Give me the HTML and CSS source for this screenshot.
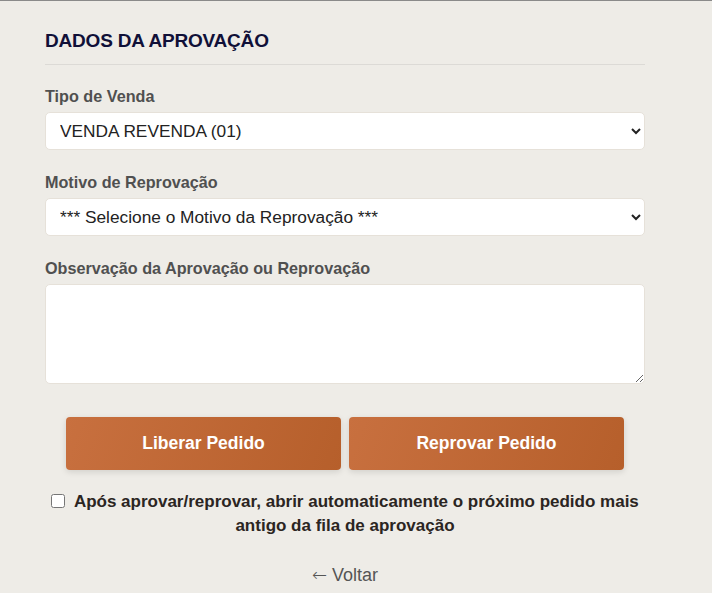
FILE: index.html
```html
<!DOCTYPE html>
<html lang="pt-BR">
<head>
    <meta charset="UTF-8">
    <meta name="viewport" content="width=device-width, initial-scale=1.0">
    <title>Dados da Aprovação</title>
    <link rel="stylesheet" href="styles.css">
</head>
<body>

    <div class="container">
        <h2 class="section-title">DADOS DA APROVAÇÃO</h2>

        <label for="tipo-venda">Tipo de Venda</label>
        <select id="tipo-venda">
            <option selected>VENDA REVENDA (01)</option>
            <option>VENDA CONSUMIDOR (02)</option>
        </select>

        <label for="motivo">Motivo de Reprovação</label>
        <select id="motivo">
            <option selected>*** Selecione o Motivo da Reprovação ***</option>
            <option>Limite de crédito excedido</option>
            <option>Cliente com pendências</option>
        </select>

        <label for="observacao">Observação da Aprovação ou Reprovação</label>
        <textarea id="observacao"></textarea>

        <div class="actions">
            <button class="btn">Liberar Pedido</button>
            <button class="btn">Reprovar Pedido</button>
        </div>

        <p class="auto-next">
            <input type="checkbox" id="auto-next">
            <label for="auto-next">Após aprovar/reprovar, abrir automaticamente o próximo pedido mais antigo da fila de aprovação</label>
        </p>

        <div class="back"><a href="#"><span class="arrow">&larr;</span> Voltar</a></div>
    </div>

</body>
</html>
```

FILE: styles.css
```css
/* Global Styles */
body {
    font-family: 'Liberation Sans', Arial, sans-serif;
    background: #eeece7;
    margin: 0;
    padding: 0;
    border-top: 1px solid #8a8a8a;
    color: #333;
}

.container {
    width: 600px;
    padding: 29px 0 0 45px;
}

.section-title {
    font-size: 19px;
    line-height: 22px;
    font-weight: bold;
    color: #101038;
    margin: 0 0 21px;
    padding-bottom: 12px;
    border-bottom: 1px solid #dcdad6;
    letter-spacing: -0.2px;
}

label {
    display: block;
    font-size: 16.2px;
    line-height: 20px;
    font-weight: bold;
    color: #505050;
    margin-bottom: 6px;
}

select, textarea {
    display: block;
    width: 100%;
    box-sizing: border-box;
    background-color: #fff;
    border: 1px solid #e6e1d9;
    border-radius: 5px;
    font-family: 'Liberation Sans', Arial, sans-serif;
    font-size: 17.3px;
    color: #222;
    margin: 0 0 22px;
}

select {
    height: 38px;
    padding: 0 10px 0 10px;
}

textarea {
    height: 100px;
    padding: 8px 13px;
    margin-bottom: 33px;
}

.actions {
    display: flex;
    justify-content: center;
    gap: 8px;
}

.btn {
    width: 275px;
    height: 53px;
    background: linear-gradient(110deg, #c8703f, #b65f2b);
    color: #fff;
    font-family: 'Liberation Sans', Arial, sans-serif;
    font-size: 17.5px;
    font-weight: bold;
    border: none;
    border-radius: 4px;
    box-shadow: 0 2px 6px rgba(0, 0, 0, 0.12);
    cursor: pointer;
}

.auto-next {
    margin: 20px 0 0;
    text-align: center;
    font-size: 17px;
    line-height: 24px;
}

.auto-next input {
    margin: 0 4px 0 0;
    width: 14px;
    height: 14px;
    vertical-align: -1px;
}

.auto-next label {
    display: inline;
    font-size: 17px;
    color: #2b2522;
}

.back {
    margin-top: 26px;
    text-align: center;
    font-size: 18px;
    line-height: 22px;
}

.back a {
    color: #555;
    text-decoration: none;
}

.back .arrow {
    font-family: 'DejaVu Sans', sans-serif;
    font-weight: 300;
}
```
